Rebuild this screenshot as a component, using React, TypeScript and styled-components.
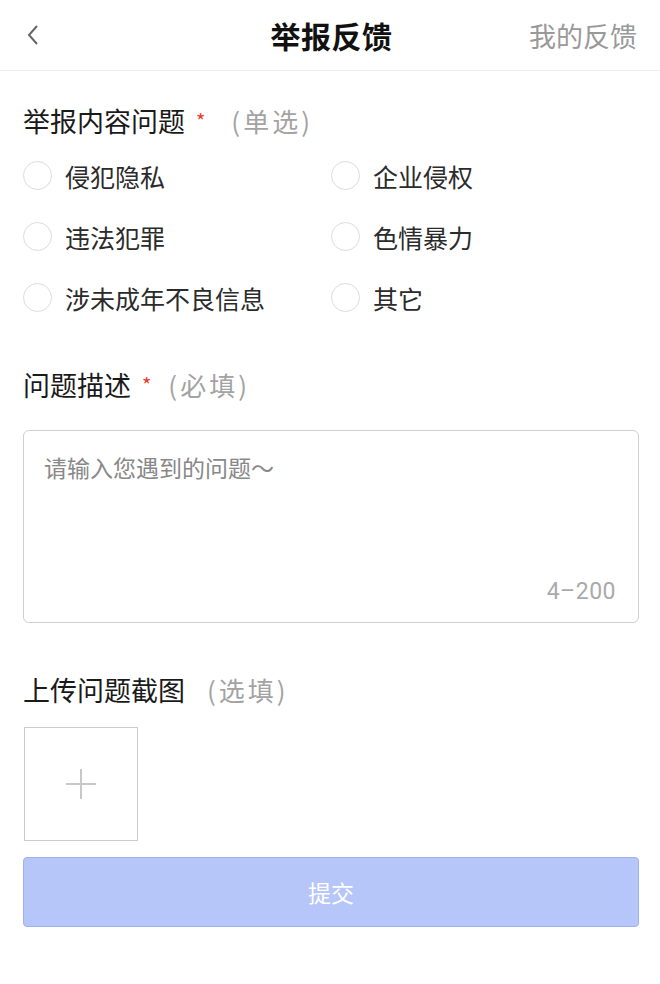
import styled, { createGlobalStyle } from "styled-components";

const GlobalStyle = createGlobalStyle`
    html, body {
        margin: 0;
        padding: 0;
        background: #ffffff;
    }
    body {
        font-family: "Noto Sans CJK SC", "Noto Sans", sans-serif;
    }
`;

const Page = styled.div`
    width: 660px;
    min-height: 984px;
    background: #fff;
`;

const Header = styled.header`
    height: 71px;
    display: grid;
    grid-template-columns: 1fr auto 1fr;
    align-items: center;
    border-bottom: 1px solid #eeeeee;
    box-sizing: border-box;
    padding: 0 23px 0 26px;
`;

const BackButton = styled.button`
    border: none;
    background: none;
    padding: 0;
    width: 20px;
    height: 24px;
    display: flex;
    align-items: center;
    justify-self: start;
`;

const Title = styled.h1`
    margin: 0;
    font-size: 30px;
    font-weight: 700;
    color: #111;
    letter-spacing: 0.5px;
`;

const HeaderLink = styled.span`
    justify-self: end;
    font-size: 27px;
    color: #999;
`;

const Body = styled.main`
    padding: 0 21px 0 23px;
`;

const SectionTitle = styled.div<{ $top: number }>`
    margin-top: ${(p) => p.$top}px;
    display: flex;
    align-items: center;
    font-size: 27px;
    line-height: 36px;
    color: #1a1a1a;
`;

const Star = styled.span`
    color: #f0392b;
    font-size: 20px;
    margin-left: 11px;
`;

const Hint = styled.span<{ $gap: number }>`
    color: #a3a3a3;
    margin-left: ${(p) => p.$gap}px;
    font-size: 26px;
    letter-spacing: 3px;
`;

const OptionGrid = styled.div`
    display: grid;
    grid-template-columns: 308px 1fr;
    row-gap: 32px;
    margin-top: 22px;
`;

const Option = styled.label`
    display: flex;
    align-items: center;
    height: 29px;
    font-size: 25px;
    color: #2b2b2b;
`;

const Radio = styled.span`
    width: 27px;
    height: 27px;
    border: 1px solid #dcdcdc;
    border-radius: 50%;
    margin-right: 13px;
    flex-shrink: 0;
`;

const TextBox = styled.div`
    margin-top: 27px;
    height: 193px;
    box-sizing: border-box;
    border: 1.5px solid #cfcfcf;
    border-radius: 6px;
    padding: 20px 22px 17px 20px;
    display: flex;
    flex-direction: column;
    justify-content: space-between;
`;

const Placeholder = styled.div`
    font-size: 23px;
    color: #888;
    line-height: 32px;
`;

const Counter = styled.div`
    align-self: flex-end;
    font-family: "Roboto", "Noto Sans", sans-serif;
    font-size: 23px;
    letter-spacing: 0.5px;
    color: #aaa;
`;

const UploadBox = styled.div`
    margin-top: 19px;
    margin-left: 1px;
    width: 114px;
    height: 114px;
    box-sizing: border-box;
    border: 1.5px solid #cccccc;
    display: flex;
    align-items: center;
    justify-content: center;
`;

const SubmitButton = styled.button`
    margin-top: 16px;
    width: 100%;
    height: 70px;
    background: #b7c6f8;
    border: 1.5px solid #9eb0f2;
    border-radius: 4px;
    color: #fff;
    font-family: "Noto Sans CJK SC", sans-serif;
    font-size: 23px;
`;

const options = ["侵犯隐私", "企业侵权", "违法犯罪", "色情暴力", "涉未成年不良信息", "其它"];

export default function App() {
    return (
        <Page>
            <GlobalStyle />
            <Header>
                <BackButton>
                    <svg width="14" height="22" viewBox="0 0 14 22">
                        <path d="M11 2 L3 11 L11 20" fill="none" stroke="#666" strokeWidth="2" />
                    </svg>
                </BackButton>
                <Title>举报反馈</Title>
                <HeaderLink>我的反馈</HeaderLink>
            </Header>
            <Body>
                <SectionTitle $top={32}>
                    举报内容问题<Star>*</Star>
                    <Hint $gap={26}>(单选)</Hint>
                </SectionTitle>
                <OptionGrid>
                    {options.map((o) => (
                        <Option key={o}>
                            <Radio />
                            {o}
                        </Option>
                    ))}
                </OptionGrid>
                <SectionTitle $top={55}>
                    问题描述<Star>*</Star>
                    <Hint $gap={17}>(必填)</Hint>
                </SectionTitle>
                <TextBox>
                    <Placeholder>请输入您遇到的问题～</Placeholder>
                    <Counter>4–200</Counter>
                </TextBox>
                <SectionTitle $top={49}>
                    上传问题截图
                    <Hint $gap={22}>(选填)</Hint>
                </SectionTitle>
                <UploadBox>
                    <svg width="32" height="32" viewBox="0 0 32 32">
                        <path d="M16 1 V31 M1 16 H31" stroke="#c8c8c8" strokeWidth="2" />
                    </svg>
                </UploadBox>
                <SubmitButton>提交</SubmitButton>
            </Body>
        </Page>
    );
}
